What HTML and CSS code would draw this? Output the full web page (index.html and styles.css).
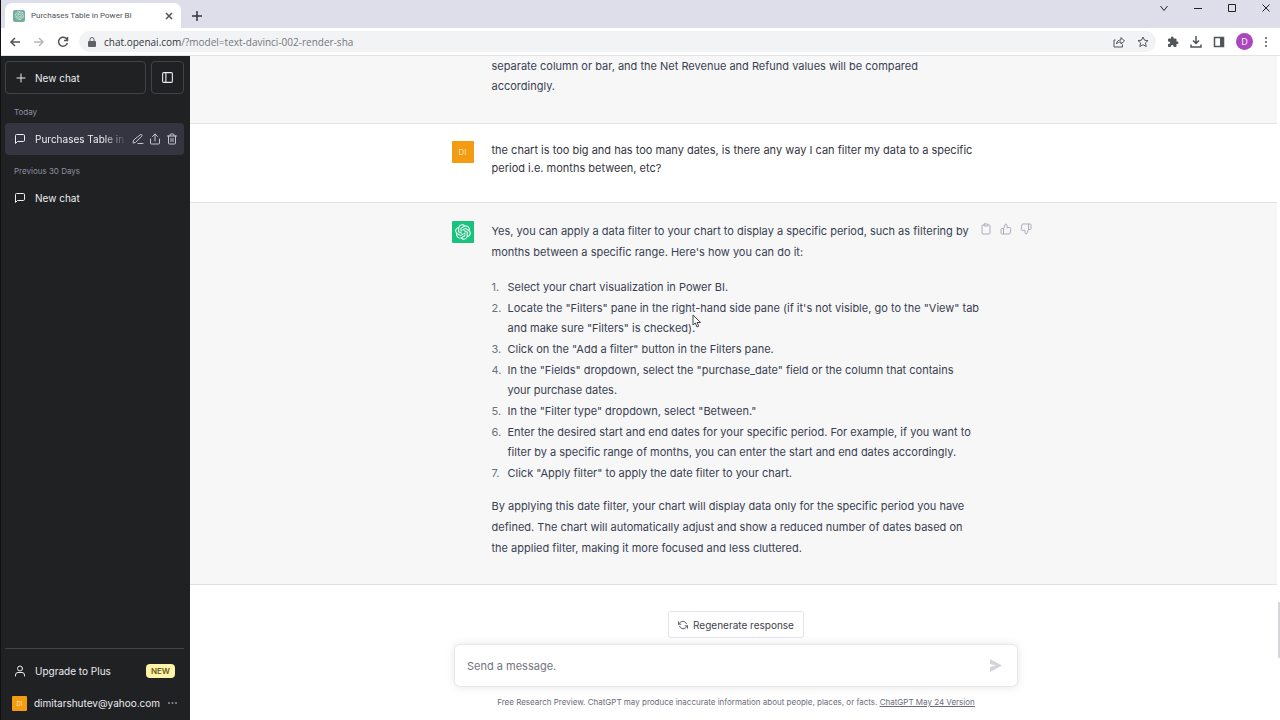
FILE: index.html
```html
<!DOCTYPE html>
<html lang="en">
<head>
<meta charset="utf-8">
<meta name="viewport" content="width=device-width, initial-scale=1">
<title>Purchases Table in Power BI</title>
<link rel="stylesheet" href="styles.css">
</head>
<body>
<svg class="sprite" aria-hidden="true">
  <symbol id="chat" viewBox="0 0 24 24"><path d="M21 15a2 2 0 0 1-2 2H7l-4 4V5a2 2 0 0 1 2-2h14a2 2 0 0 1 2 2z"/></symbol>
  <symbol id="openai" viewBox="0 0 41 41"><path d="M37.532 16.87a9.963 9.963 0 0 0-.856-8.184 10.078 10.078 0 0 0-10.855-4.835A9.964 9.964 0 0 0 18.306.5a10.079 10.079 0 0 0-9.614 6.977 9.967 9.967 0 0 0-6.664 4.834 10.08 10.08 0 0 0 1.24 11.817 9.965 9.965 0 0 0 .856 8.185 10.079 10.079 0 0 0 10.855 4.835 9.965 9.965 0 0 0 7.516 3.35 10.078 10.078 0 0 0 9.617-6.981 9.967 9.967 0 0 0 6.663-4.834 10.079 10.079 0 0 0-1.243-11.813zM22.498 37.886a7.474 7.474 0 0 1-4.799-1.735c.061-.033.168-.091.237-.134l7.964-4.6a1.294 1.294 0 0 0 .655-1.134V19.054l3.366 1.944a.12.12 0 0 1 .066.092v9.299a7.505 7.505 0 0 1-7.49 7.496zM6.392 31.006a7.471 7.471 0 0 1-.894-5.023c.06.036.162.099.237.141l7.964 4.6a1.297 1.297 0 0 0 1.308 0l9.724-5.614v3.888a.12.12 0 0 1-.048.103l-8.051 4.649a7.504 7.504 0 0 1-10.24-2.744zM4.297 13.62A7.469 7.469 0 0 1 8.2 10.333c0 .068-.004.19-.004.274v9.201a1.294 1.294 0 0 0 .654 1.132l9.723 5.614-3.366 1.944a.12.12 0 0 1-.114.01L7.04 23.856a7.504 7.504 0 0 1-2.743-10.237zm27.658 6.437-9.724-5.615 3.367-1.943a.121.121 0 0 1 .113-.01l8.052 4.648a7.498 7.498 0 0 1-1.158 13.528v-9.476a1.293 1.293 0 0 0-.65-1.132zm3.35-5.043c-.059-.037-.162-.099-.236-.141l-7.965-4.6a1.298 1.298 0 0 0-1.308 0l-9.723 5.614v-3.888a.12.12 0 0 1 .048-.103l8.05-4.645a7.497 7.497 0 0 1 11.135 7.763zm-21.063 6.929-3.367-1.944a.12.12 0 0 1-.065-.092v-9.299a7.497 7.497 0 0 1 12.293-5.756 6.94 6.94 0 0 0-.236.134l-7.965 4.6a1.294 1.294 0 0 0-.654 1.132l-.006 11.225zm1.829-3.943 4.33-2.501 4.332 2.5v5l-4.331 2.5-4.331-2.5V18z"/></symbol>
  <symbol id="thumb" viewBox="0 0 24 24"><path d="M14 9V5a3 3 0 0 0-3-3l-4 9v11h11.280a2 2 0 0 0 2-1.700l1.380-9a2 2 0 0 0-2-2.300zM7 22H4a2 2 0 0 1-2-2v-7a2 2 0 0 1 2-2h3"/></symbol>
</svg>

<div class="browser">
  <header class="chrome">
    <div class="tabstrip">
      <div class="tab">
        <span class="favicon"><svg class="solid" width="9" height="9"><use href="#openai"/></svg></span>
        <span class="tab-title">Purchases Table in Power BI</span>
        <button class="plain" aria-label="Close tab"><svg class="line" width="8" height="8" viewBox="0 0 8 8"><path d="M1 1l6 6M7 1L1 7"/></svg></button>
      </div>
      <button class="plain new-tab" aria-label="New tab"><svg class="line" width="10" height="10" viewBox="0 0 10 10"><path d="M5 0v10M0 5h10"/></svg></button>
      <div class="window-controls">
        <button class="plain" aria-label="Search tabs"><svg class="thin" width="10" height="10" viewBox="0 0 10 10"><path d="M1.500 3L5 7.500 8.500 3"/></svg></button>
        <button class="plain" aria-label="Minimize"><svg class="thin" width="10" height="10" viewBox="0 0 10 10"><path d="M1 5.500h8"/></svg></button>
        <button class="plain" aria-label="Maximize"><svg class="thin" width="10" height="10" viewBox="0 0 10 10"><path d="M1.500 1.500h7v7h-7z"/></svg></button>
        <button class="plain" aria-label="Close window"><svg class="thin" width="10" height="10" viewBox="0 0 10 10"><path d="M1.500 1.500l7 7M8.500 1.500l-7 7"/></svg></button>
      </div>
    </div>
    <div class="toolbar">
      <nav class="nav-buttons" aria-label="Browser navigation">
        <button class="plain" aria-label="Back"><svg class="line" width="12" height="12" viewBox="0 0 12 12"><path d="M11 6H2M6 2L2 6l4 4"/></svg></button>
        <button class="plain faded" aria-label="Forward"><svg class="line" width="12" height="12" viewBox="0 0 12 12"><path d="M1 6h9M6 2l4 4-4 4"/></svg></button>
        <button class="plain" aria-label="Reload"><svg class="line" width="12" height="12" viewBox="0 0 12 12"><path d="M10 3.500A4.500 4.500 0 1 0 10.400 7M10.500 1v3.500H7"/></svg></button>
      </nav>
      <div class="address">
        <svg width="8" height="10" viewBox="0 0 8 10"><path fill="#5f6368" d="M1 4h6a1 1 0 0 1 1 1v4a1 1 0 0 1-1 1H1a1 1 0 0 1-1-1V5a1 1 0 0 1 1-1z"/><path fill="none" stroke="#5f6368" d="M2 4V2.500a2 2 0 0 1 4 0V4"/></svg>
        <div class="url"><span class="host">chat.openai.com</span>/?model=text-davinci-002-render-sha</div>
        <button class="plain" aria-label="Share page"><svg class="thin" width="12" height="12" viewBox="0 0 12 12"><path d="M2.500 4H1v7h8.500V8.500M3.500 8c.3-3 2-4 4.500-4V1.500L11.500 5 8 8V6C6 6 4.500 6.500 3.500 8z"/></svg></button>
        <button class="plain" aria-label="Bookmark"><svg class="thin" width="12" height="12" viewBox="0 0 12 12"><path d="M6 1l1.500 3.200 3.500.4-2.600 2.300.8 3.600L6 8.700 2.800 10.500l.8-3.600L1 4.600l3.500-.4z"/></svg></button>
      </div>
      <div class="extensions">
        <button class="plain" aria-label="Extensions"><svg width="12" height="12" viewBox="0 0 24 24"><path fill="#50555a" d="M20.500 11H19V7a2 2 0 0 0-2-2h-4V3.500a2.500 2.500 0 0 0-5 0V5H4a2 2 0 0 0-2 2v3.800h1.500a2.700 2.700 0 0 1 0 5.400H2V20a2 2 0 0 0 2 2h3.800v-1.500a2.700 2.700 0 0 1 5.400 0V22H17a2 2 0 0 0 2-2v-4h1.500a2.500 2.500 0 0 0 0-5z"/></svg></button>
        <button class="plain" aria-label="Downloads"><svg class="line" width="12" height="12" viewBox="0 0 12 12"><path d="M6 0v7.500M3 4.500l3 3 3-3M1 8.500V11h10V8.500"/></svg></button>
        <button class="plain" aria-label="Side panel"><svg width="12" height="12" viewBox="0 0 12 12"><path fill="none" stroke="#50555a" stroke-width="1.500" d="M1.500 1.500h9v9h-9z"/><path fill="#50555a" d="M7 1h4v10H7z"/></svg></button>
        <button class="profile" aria-label="Profile">D</button>
        <button class="plain" aria-label="Menu"><svg width="4" height="12" viewBox="0 0 4 12" fill="#50555a"><circle cx="2" cy="2" r="1"/><circle cx="2" cy="6" r="1"/><circle cx="2" cy="10" r="1"/></svg></button>
      </div>
    </div>
  </header>

  <div class="app">
    <aside class="sidebar">
      <div class="top-buttons">
        <button class="outline new-chat"><svg class="feather" width="12" height="12" viewBox="0 0 24 24"><path d="M12 4v16M4 12h16"/></svg>New chat</button>
        <button class="outline toggle" aria-label="Hide sidebar"><svg class="feather" width="13" height="13" viewBox="0 0 24 24"><rect x="3" y="3" width="18" height="18" rx="2"/><path d="M9 3v18"/></svg></button>
      </div>
      <h2 class="group">Today</h2>
      <div class="chat active">
        <a class="chat-link" href="#"><svg class="feather" width="12" height="12"><use href="#chat"/></svg><span class="chat-title">Purchases Table in Power BI</span></a>
        <button class="plain" aria-label="Rename"><svg class="feather" width="12" height="12" viewBox="0 0 24 24"><path d="M12 21h10M16.500 3.500a2.100 2.100 0 0 1 3 3L7 19l-5 1 1-5z"/></svg></button>
        <button class="plain" aria-label="Share"><svg class="feather" width="12" height="12" viewBox="0 0 24 24"><path d="M3 12v8a2 2 0 0 0 2 2h14a2 2 0 0 0 2-2v-8M17 7l-5-5-5 5M12 2v14"/></svg></button>
        <button class="plain" aria-label="Delete"><svg class="feather" width="12" height="12" viewBox="0 0 24 24"><path d="M3 6h18M19 6v14a2 2 0 0 1-2 2H7a2 2 0 0 1-2-2V6M8 6V4a2 2 0 0 1 2-2h4a2 2 0 0 1 2 2v2M10 11v6M14 11v6"/></svg></button>
      </div>
      <h2 class="group">Previous 30 Days</h2>
      <div class="chat">
        <a class="chat-link" href="#"><svg class="feather" width="12" height="12"><use href="#chat"/></svg><span>New chat</span></a>
      </div>
      <div class="account">
        <button class="account-row"><svg class="feather" width="12" height="12" viewBox="0 0 24 24"><circle cx="12" cy="7" r="5"/><path d="M3 22v-2a5 5 0 0 1 5-5h8a5 5 0 0 1 5 5v2"/></svg><span>Upgrade to Plus</span><span class="badge">NEW</span></button>
        <button class="account-row user"><span class="avatar mini">DI</span><span>dimitarshutev@yahoo.com</span><svg class="dots" width="11" height="4" viewBox="0 0 11 4"><circle cx="2" cy="2" r="1"/><circle cx="5.500" cy="2" r="1"/><circle cx="9" cy="2" r="1"/></svg></button>
      </div>
    </aside>

    <main class="main">
      <div class="thread">
        <article class="message reply previous">
          <div class="column"><div class="avatar-space"></div>
            <div class="text"><p>separate column or bar, and the Net Revenue and Refund values will be compared<br>accordingly.</p></div>
          </div>
        </article>
        <article class="message question">
          <div class="column"><span class="avatar">DI</span>
            <div class="text"><p>the chart is too big and has too many dates, is there any way I can filter my data to a specific<br>period i.e. months between, etc?</p></div>
          </div>
        </article>
        <article class="message reply">
          <div class="column"><span class="avatar bot"><svg class="solid" width="16" height="16"><use href="#openai"/></svg></span>
            <div class="text">
              <p>Yes, you can apply a data filter to your chart to display a specific period, such as filtering by<br>months between a specific range. Here's how you can do it:</p>
              <ol>
                <li>Select your chart visualization in Power BI.</li>
                <li>Locate the "Filters" pane in the right-hand side pane (if it's not visible, go to the "View" tab<br>and make sure "Filters" is checked).</li>
                <li>Click on the "Add a filter" button in the Filters pane.</li>
                <li>In the "Fields" dropdown, select the "purchase_date" field or the column that contains<br>your purchase dates.</li>
                <li>In the "Filter type" dropdown, select "Between."</li>
                <li>Enter the desired start and end dates for your specific period. For example, if you want to<br>filter by a specific range of months, you can enter the start and end dates accordingly.</li>
                <li>Click "Apply filter" to apply the date filter to your chart.</li>
              </ol>
              <p>By applying this date filter, your chart will display data only for the specific period you have<br>defined. The chart will automatically adjust and show a reduced number of dates based on<br>the applied filter, making it more focused and less cluttered.</p>
            </div>
            <div class="actions">
              <button class="plain" aria-label="Copy"><svg class="feather" width="12" height="12" viewBox="0 0 24 24"><path d="M16 4h2a2 2 0 0 1 2 2v14a2 2 0 0 1-2 2H6a2 2 0 0 1-2-2V6a2 2 0 0 1 2-2h2"/><rect x="8" y="2" width="8" height="4" rx="1"/></svg></button>
              <button class="plain" aria-label="Good response"><svg class="feather" width="12" height="12"><use href="#thumb"/></svg></button>
              <button class="plain" aria-label="Bad response"><svg class="feather flipped" width="12" height="12"><use href="#thumb"/></svg></button>
            </div>
          </div>
        </article>
      </div>

      <form class="composer">
        <button type="button" class="regenerate"><svg class="feather" width="10" height="10" viewBox="0 0 24 24"><path d="M1 4v6h6M23 20v-6h-6M20.500 9A9 9 0 0 0 5.600 5.600L1 10M23 14l-4.600 4.400A9 9 0 0 1 3.500 15"/></svg>Regenerate response</button>
        <div class="field">
          <input type="text" placeholder="Send a message." aria-label="Send a message.">
          <button class="plain send" aria-label="Send"><svg width="13" height="13" viewBox="0 0 13 13"><path fill="#d3d3da" d="M1 0l12 6.500L1 13V8l6-1.500L1 5z"/></svg></button>
        </div>
        <p class="note">Free Research Preview. ChatGPT may produce inaccurate information about people, places, or facts. <a href="#">ChatGPT May 24 Version</a></p>
      </form>
      <div class="scroll-thumb"></div>
    </main>
  </div>
</div>
<svg class="cursor" width="10" height="14" viewBox="0 0 10 14" aria-hidden="true"><path fill="#fff" stroke="#444" d="M1 1v10l2.300-2 1.700 4 1.700-.8L5 8.500h3.500z"/></svg>
</body>
</html>
```
FILE: styles.css
```css
* { box-sizing: border-box; }

body {
  margin: 0;
  font-family: Inter, "Liberation Sans", sans-serif;
  font-size: 11px;
  color: #343541;
}

button, input { font: inherit; color: inherit; }
p, h2, ol { margin: 0; }
svg { display: block; flex: none; }

.sprite { position: absolute; width: 0; height: 0; }
.plain { display: flex; padding: 0; border: 0; background: none; color: inherit; }
.feather { fill: none; stroke: currentColor; stroke-width: 2; stroke-linecap: round; stroke-linejoin: round; }
.solid { fill: currentColor; }
.line { fill: none; stroke: currentColor; stroke-width: 1.5; }
.thin { fill: none; stroke: currentColor; stroke-width: 1; }

.browser { display: flex; flex-direction: column; height: 100vh; overflow: hidden; border-left: 1px solid #111; }

/* Browser frame */
.chrome { flex: none; border-bottom: 1px solid #e4e4e6; color: #50555a; font-family: "Open Sans", "Noto Sans", sans-serif; }
.tabstrip { display: flex; height: 28px; padding-left: 4px; background: #dedeea; }
.tab { display: flex; align-items: center; gap: 6px; width: 176px; margin-top: 3px; padding: 0 8px; border-radius: 7px 7px 0 0; background: #fff; }
.favicon { display: grid; place-items: center; width: 12px; height: 12px; border-radius: 2px; background: #75ad9c; color: #d5eee5; }
.tab-title { flex: 1; font-family: Roboto, sans-serif; font-size: 8px; white-space: nowrap; }
.new-tab { align-self: center; margin: 3px 0 0 11px; color: #33363a; }
.window-controls { display: flex; gap: 24px; margin-left: auto; padding: 3px 9px 0 0; color: #222; }
.toolbar { display: flex; align-items: center; height: 27px; padding-right: 12px; background: #fff; }
.nav-buttons { display: flex; gap: 12px; padding: 0 10px 0 8px; }
.faded { color: #b5b7ba; }
.address { display: flex; flex: 1; align-items: center; gap: 12px; height: 21px; padding: 0 7px 0 9px; border-radius: 11px; background: #f1f3f4; }
.url { flex: 1; margin-left: -4px; font-size: 10px; color: #74787d; white-space: nowrap; }
.host { color: #33363a; }
.extensions { display: flex; align-items: center; gap: 11px; padding-left: 11px; }
.profile { width: 17px; height: 17px; padding: 0; border: 0; border-radius: 50%; background: #ab47bc; color: #fff; font-size: 9px; }

.app { display: flex; flex: 1; min-height: 0; }

/* Sidebar */
.sidebar { display: flex; flex: none; flex-direction: column; width: 189px; padding: 5px 6px 0 4px; background: #202123; color: #ececf1; font-size: 10px; }
.top-buttons { display: flex; gap: 5px; margin-bottom: 2px; }
.outline { display: flex; align-items: center; gap: 8px; height: 33px; padding: 0 9px; border: 1px solid #424347; border-radius: 4px; background: none; }
.new-chat { flex: 1; }
.toggle { width: 33px; }
.group { padding: 10px 9px 5px; font-size: 8px; line-height: 12px; font-weight: 400; color: #8e8ea0; }
.chat { display: flex; align-items: center; gap: 5px; height: 32px; padding: 0 6px 0 9px; border-radius: 4px; color: #c5c5d2; }
.active { background: #343541; }
.chat-link { display: flex; flex: 1; align-items: center; gap: 9px; min-width: 0; color: #ececf1; text-decoration: none; }
.chat-title { overflow: hidden; white-space: nowrap; mask-image: linear-gradient(to right, #000 75%, transparent); }
.account { margin-top: auto; padding-bottom: 1px; border-top: 1px solid #424347; }
.account-row { display: flex; align-items: center; gap: 9px; width: 100%; height: 32px; margin-top: 6px; padding: 0 9px; border: 0; background: none; text-align: left; white-space: nowrap; }
.user { gap: 7px; margin-top: 0; padding-left: 7px; }
.badge { margin-left: auto; padding: 0 5px; border-radius: 4px; background: #fef3a8; color: #665b20; font-size: 8px; line-height: 14px; font-weight: 600; }
.dots { margin-left: auto; fill: #8e8ea0; }

.avatar { display: grid; flex: none; place-items: center; width: 22px; height: 22px; border-radius: 1px; background: #f39c12; color: #fde3b5; font-size: 8px; }
.mini { width: 15px; height: 15px; font-size: 6px; }
.bot { background: #19c37d; color: #fff; }

/* Conversation */
.main { position: relative; display: flex; flex: 1; flex-direction: column; min-width: 0; background: #fff; }
.thread { margin-right: 3px; }
.message { border-bottom: 1px solid #e2e2e5; }
.reply { background: #f7f7f8; color: #374151; }
.column { display: flex; max-width: 564px; margin: 0 auto; padding: 18px 0 25px; }
.avatar, .avatar-space { margin-right: 18px; }
.mini { margin-right: 0; }
.avatar-space { width: 22px; }
.text { flex: 1; line-height: 21px; white-space: nowrap; }
.previous .column { padding: 0 0 27px; }
.previous .text { line-height: 20px; }
.question .text { line-height: 18px; }
.question .column { padding-top: 17px; }
.text ol { display: grid; gap: 1px; margin: 14px 0 13px; padding-left: 16px; line-height: 20px; list-style: none; counter-reset: step; }
.text li { counter-increment: step; }
.text li::before { content: counter(step) "."; float: left; width: 16px; margin-left: -16px; color: #6b7280; }
.actions { display: flex; flex: none; gap: 8px; align-self: flex-start; margin-right: -16px; padding-top: 2px; color: #acacbe; }
.flipped { transform: rotate(180deg); }

/* Message box */
.composer { display: flex; flex-direction: column; align-items: center; margin-top: auto; padding: 0 16px 12px 18px; }
.regenerate { display: flex; align-items: center; gap: 5px; height: 27px; padding: 0 9px; border: 1px solid #e5e5ea; border-radius: 3px; background: #fff; color: #40414f; font-size: 10px; }
.field { display: flex; align-items: center; width: 100%; max-width: 564px; height: 43px; margin: 6px 0 9px; padding: 0 15px 0 12px; border: 1px solid #e8e8eb; border-radius: 6px; background: #fff; box-shadow: 0 0 10px rgba(0, 0, 0, 0.1); }
.field input { flex: 1; min-width: 0; padding: 0; border: 0; outline: 0; background: none; }
.field input::placeholder { color: #73747f; opacity: 1; }
.note { font-size: 8px; line-height: 12px; color: #6b6c7b; }
.note a { color: inherit; }
.scroll-thumb { position: absolute; right: 0; bottom: 62px; width: 2px; height: 56px; background: #d6d6e0; }
.cursor { position: absolute; left: 692px; top: 314px; }
```
